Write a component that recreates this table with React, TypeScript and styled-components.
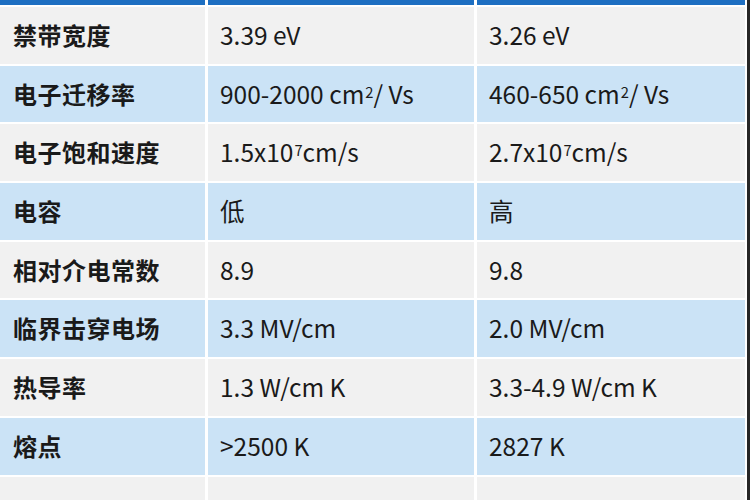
import { FC, ReactNode } from "react";
import styled, { createGlobalStyle } from "styled-components";

const Colors = {
  header: "#1e6fc2",
  rowGray: "#f1f1f1",
  rowBlue: "#cbe3f6",
  gap: "#ffffff",
  text: "#1a1a1a",
  edge: "#262626",
};

const GlobalStyle = createGlobalStyle`
  html, body {
    margin: 0;
    padding: 0;
    background: #ffffff;
  }
  body {
    font-family: "Noto Sans CJK SC", "Noto Sans", sans-serif;
    width: 750px;
    height: 500px;
    overflow: hidden;
  }
`;

const SFrame = styled.div`
  display: flex;
  width: 750px;
  height: 500px;
  overflow: hidden;
  background: ${Colors.gap};
`;

const STable = styled.div`
  display: grid;
  grid-template-columns: 205px 266px 268px;
  grid-template-rows: 5px;
  grid-auto-rows: 56.7px;
  column-gap: 3px;
  row-gap: 2px;
  width: 745px;
  align-content: start;
`;

const SEdge = styled.div`
  margin-left: 2px;
  width: 3px;
  background: ${Colors.edge};
`;

const SHeadCell = styled.div`
  background: ${Colors.header};
`;

const SCell = styled.div<{ $tone: "gray" | "blue"; $label?: boolean }>`
  display: flex;
  align-items: center;
  padding-left: ${(p) => (p.$label ? "13px" : "12px")};
  padding-bottom: 2px;
  background: ${(p) => (p.$tone === "blue" ? Colors.rowBlue : Colors.rowGray)};
  color: ${Colors.text};
  font-size: ${(p) => (p.$label ? "24px" : "24.5px")};
  font-weight: ${(p) => (p.$label ? 700 : 400)};
  white-space: nowrap;
  letter-spacing: ${(p) => (p.$label ? "0.5px" : "0")};
`;

const SSup = styled.sup`
  font-size: 0.6em;
  line-height: 0;
  position: relative;
  top: -0.1em;
  margin-left: 1px;
`;

interface Row {
  label: string;
  gan: ReactNode;
  sic: ReactNode;
}

const rows: Row[] = [
  { label: "禁带宽度", gan: "3.39 eV", sic: "3.26 eV" },
  {
    label: "电子迁移率",
    gan: (
      <>
        900-2000 cm<SSup>2</SSup>/ Vs
      </>
    ),
    sic: (
      <>
        460-650 cm<SSup>2</SSup>/ Vs
      </>
    ),
  },
  {
    label: "电子饱和速度",
    gan: (
      <>
        1.5x10<SSup>7</SSup>cm/s
      </>
    ),
    sic: (
      <>
        2.7x10<SSup>7</SSup>cm/s
      </>
    ),
  },
  { label: "电容", gan: "低", sic: "高" },
  { label: "相对介电常数", gan: "8.9", sic: "9.8" },
  { label: "临界击穿电场", gan: "3.3 MV/cm", sic: "2.0 MV/cm" },
  { label: "热导率", gan: "1.3 W/cm K", sic: "3.3-4.9 W/cm K" },
  { label: "熔点", gan: ">2500 K", sic: "2827 K" },
  { label: "", gan: "", sic: "" },
];

const App: FC = () => (
  <>
    <GlobalStyle />
    <SFrame>
      <STable>
        <SHeadCell />
        <SHeadCell />
        <SHeadCell />
        {rows.map((row, i) => {
          const tone = i % 2 === 0 ? "gray" : "blue";
          return [
            <SCell key={`l${i}`} $tone={tone} $label>
              {row.label}
            </SCell>,
            <SCell key={`g${i}`} $tone={tone}>
              {row.gan}
            </SCell>,
            <SCell key={`s${i}`} $tone={tone}>
              {row.sic}
            </SCell>,
          ];
        })}
      </STable>
      <SEdge />
    </SFrame>
  </>
);

export default App;
